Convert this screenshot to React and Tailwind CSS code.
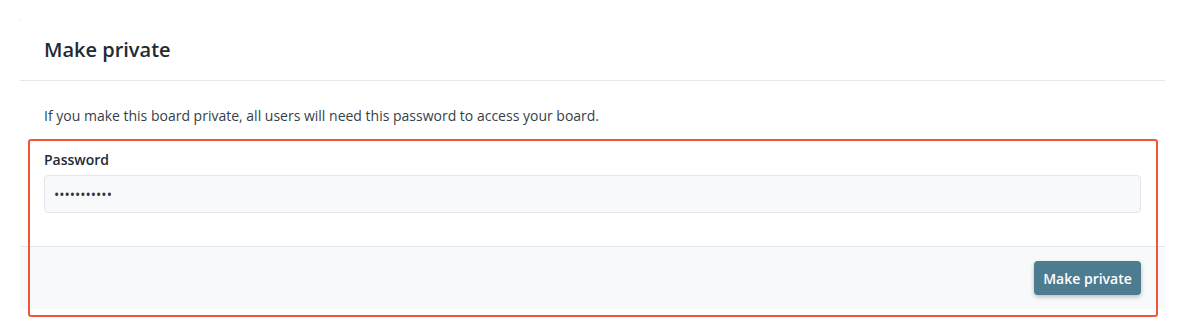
import React from "react";

function App() {
  return (
    <div className="relative min-h-[336px] bg-white pt-5" style={{ fontFamily: '"Open Sans", sans-serif' }}>
      <div className="absolute left-[20px] top-[20px] h-px w-px bg-gray-300" />
      <div className="ml-5 w-[1145px] bg-white">
        <div className="flex h-[61px] items-center border-b border-[#e3e8ef] px-6">
          <h2 className="text-[20px] font-semibold text-[#1d2b36]">Make private</h2>
        </div>
        <div className="px-6 pt-[25px] pb-[33px]">
          <p className="text-[14px] leading-5 text-[#343f4a]">
            If you make this board private, all users will need this password to access your board.
          </p>
          <label className="mt-[24px] block text-[14px] font-semibold leading-5 text-[#1d2b36]">Password</label>
          <input
            type="password"
            defaultValue="secretboard"
            className="mt-[5px] h-[38px] w-full rounded border border-[#e3e7ed] bg-[#f7f9fb] px-[9px] text-[14px] text-[#2d3640] outline-none"
          />
        </div>
        <div className="flex h-[63px] items-center justify-end border-t border-[#e3e8ef] bg-[#f7f9fb] px-6">
          <button
            type="button"
            className="h-[34px] w-[107px] rounded bg-[#4d7b90] text-[14px] font-semibold text-white shadow-[0_2px_4px_rgba(0,0,0,0.25)]"
          >
            Make private
          </button>
        </div>
      </div>
      <div className="pointer-events-none absolute left-[28px] top-[139px] h-[178px] w-[1130px] rounded-[3px] border-2 border-[#f2563a]" />
    </div>
  );
}

export default App;
